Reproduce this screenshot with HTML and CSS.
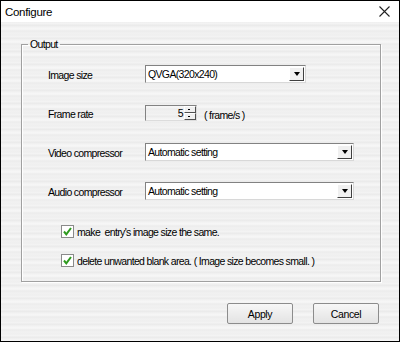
FILE: index.html
```html
<!DOCTYPE html>
<html lang="en">
<head>
    <meta charset="UTF-8">
    <title>Configure</title>
    <link rel="stylesheet" href="styles.css">
</head>
<body>
    <div class="window">
        <div class="titlebar">
            <span class="title">Configure</span>
            <svg class="close" width="11" height="11" viewBox="0 0 11 11">
                <path d="M0.5 0.5 L10.5 10.5 M10.5 0.5 L0.5 10.5" stroke="#222" stroke-width="1.1" fill="none"/>
            </svg>
        </div>

        <div class="content">
            <fieldset class="group">
                <legend>Output</legend>

                <div class="rows">
                    <div class="row">
                        <label>Image size</label>
                        <div class="combo combo-short">
                            <span class="combo-text">QVGA(320x240)</span>
                            <span class="combo-btn"><span class="arrow"></span></span>
                        </div>
                    </div>

                    <div class="row">
                        <label>Frame rate</label>
                        <div class="spin-line">
                            <div class="spin">
                                <span class="spin-value">5</span>
                                <span class="spin-btns">
                                    <span class="spin-up"></span>
                                    <span class="spin-down"></span>
                                </span>
                            </div>
                            <span class="unit">( frame/s )</span>
                        </div>
                    </div>

                    <div class="row">
                        <label>Video compressor</label>
                        <div class="combo combo-long">
                            <span class="combo-text">Automatic setting</span>
                            <span class="combo-btn"><span class="arrow"></span></span>
                        </div>
                    </div>

                    <div class="row">
                        <label>Audio compressor</label>
                        <div class="combo combo-long">
                            <span class="combo-text">Automatic setting</span>
                            <span class="combo-btn"><span class="arrow"></span></span>
                        </div>
                    </div>
                </div>

                <div class="checks">
                    <div class="check">
                        <span class="box">
                            <svg width="11" height="11" viewBox="0 0 11 11">
                                <path d="M2 5.5 L4.3 8.3 L9 2" stroke="#2e9a1e" stroke-width="2" fill="none"/>
                            </svg>
                        </span>
                        <span>make&nbsp; entry's image size the same.</span>
                    </div>
                    <div class="check">
                        <span class="box">
                            <svg width="11" height="11" viewBox="0 0 11 11">
                                <path d="M2 5.5 L4.3 8.3 L9 2" stroke="#2e9a1e" stroke-width="2" fill="none"/>
                            </svg>
                        </span>
                        <span>delete unwanted blank area. ( Image size becomes small. )</span>
                    </div>
                </div>
            </fieldset>

            <div class="buttons">
                <button type="button">Apply</button>
                <button type="button">Cancel</button>
            </div>
        </div>
    </div>
</body>
</html>
```

FILE: styles.css
```css
body {
    margin: 0;
    font-family: "Liberation Sans", Arial, sans-serif;
    font-size: 10.5px;
    letter-spacing: -0.65px;
    color: #000;
}
.window {
    width: 400px;
    height: 342px;
    box-sizing: border-box;
    border: 1px solid #000;
    background: #fff;
}
.titlebar {
    height: 21px;
    display: flex;
    align-items: center;
    justify-content: space-between;
    padding: 0 9px 0 4px;
    background: #fff;
}
.title {
    font-size: 11.5px;
    letter-spacing: -0.3px;
    color: #000;
}
.content {
    height: 319px;
    padding-top: 16px;
    box-sizing: border-box;
    background-color: #f0f0f0;
    background-image: repeating-linear-gradient(180deg,
        #efefef 0px, #f4f4f4 2px, #e9e9e9 3px, #f2f2f2 5px,
        #f7f7f7 7px, #ececec 9px, #f1f1f1 11px, #efefef 13px);
}
.group {
    margin: 0 18px 0 20px;
    height: 244px;
    box-sizing: border-box;
    border: 1px solid #a0a0a0;
    box-shadow: inset 1px 1px 0 #fff, 1px 1px 0 #fff;
    padding: 0 0 0 26px;
}
.group legend {
    padding: 0 2px;
    margin-left: -20px;
    line-height: 13px;
}
.rows {
    display: flex;
    flex-direction: column;
    gap: 20px;
    margin-top: 13px;
}
.row {
    display: grid;
    grid-template-columns: 97px auto;
    align-items: center;
    height: 19px;
}
.row label {
    padding-top: 2px;
}
.combo {
    height: 18px;
    box-sizing: border-box;
    display: flex;
    align-items: center;
    background: #fff;
    border: 1px solid #828282;
    border-right-color: #d8d8d8;
    border-bottom-color: #d8d8d8;
}
.combo-short {
    width: 161px;
}
.combo-long {
    width: 209px;
}
.combo-text {
    flex: 1;
    padding-left: 2px;
    white-space: nowrap;
}
.combo-btn {
    width: 15px;
    height: 14px;
    margin-right: 1px;
    box-sizing: border-box;
    display: flex;
    align-items: center;
    justify-content: center;
    background: #f0f0f0;
    border: 1px solid #fff;
    border-right-color: #404040;
    border-bottom-color: #404040;
}
.arrow {
    width: 0;
    height: 0;
    border-left: 3.5px solid transparent;
    border-right: 3.5px solid transparent;
    border-top: 4px solid #000;
    margin-top: 1px;
}
.spin-line {
    display: flex;
    align-items: center;
    gap: 7px;
}
.spin {
    width: 52px;
    height: 16px;
    box-sizing: border-box;
    display: flex;
    align-items: center;
    border: 1px solid #828282;
    border-right-color: #dcdcdc;
    border-bottom-color: #dcdcdc;
}
.spin-value {
    flex: 1;
    text-align: right;
    padding-right: 1px;
}
.spin-btns {
    width: 12px;
    height: 14px;
    display: flex;
    flex-direction: column;
}
.spin-up,
.spin-down {
    flex: 1;
    box-sizing: border-box;
    border: 1px solid #fff;
    border-right-color: #505050;
    border-bottom-color: #505050;
    background: #f0f0f0;
    position: relative;
}
.spin-up::after,
.spin-down::after {
    content: "";
    position: absolute;
    left: 3px;
    top: 2px;
    width: 2px;
    height: 1px;
    background: #000;
}
.unit {
    margin-top: 5px;
}
.checks {
    display: flex;
    flex-direction: column;
    gap: 16px;
    margin: 25px 0 0 13px;
}
.check {
    display: flex;
    align-items: center;
    gap: 3px;
    height: 13px;
}
.box {
    width: 11px;
    height: 11px;
    border: 1px solid #8a8a8a;
    background: #fff;
    display: flex;
}
.buttons {
    display: flex;
    justify-content: flex-end;
    gap: 20px;
    margin: 21px 20px 0 0;
}
button {
    width: 66px;
    height: 21px;
    font-family: "Liberation Sans", Arial, sans-serif;
    font-size: 10.5px;
    letter-spacing: -0.4px;
    color: #000;
    background: linear-gradient(#f7f7f7, #e3e3e3);
    border: 1px solid #8c8c8c;
    border-radius: 2px;
    padding: 0;
}
```
